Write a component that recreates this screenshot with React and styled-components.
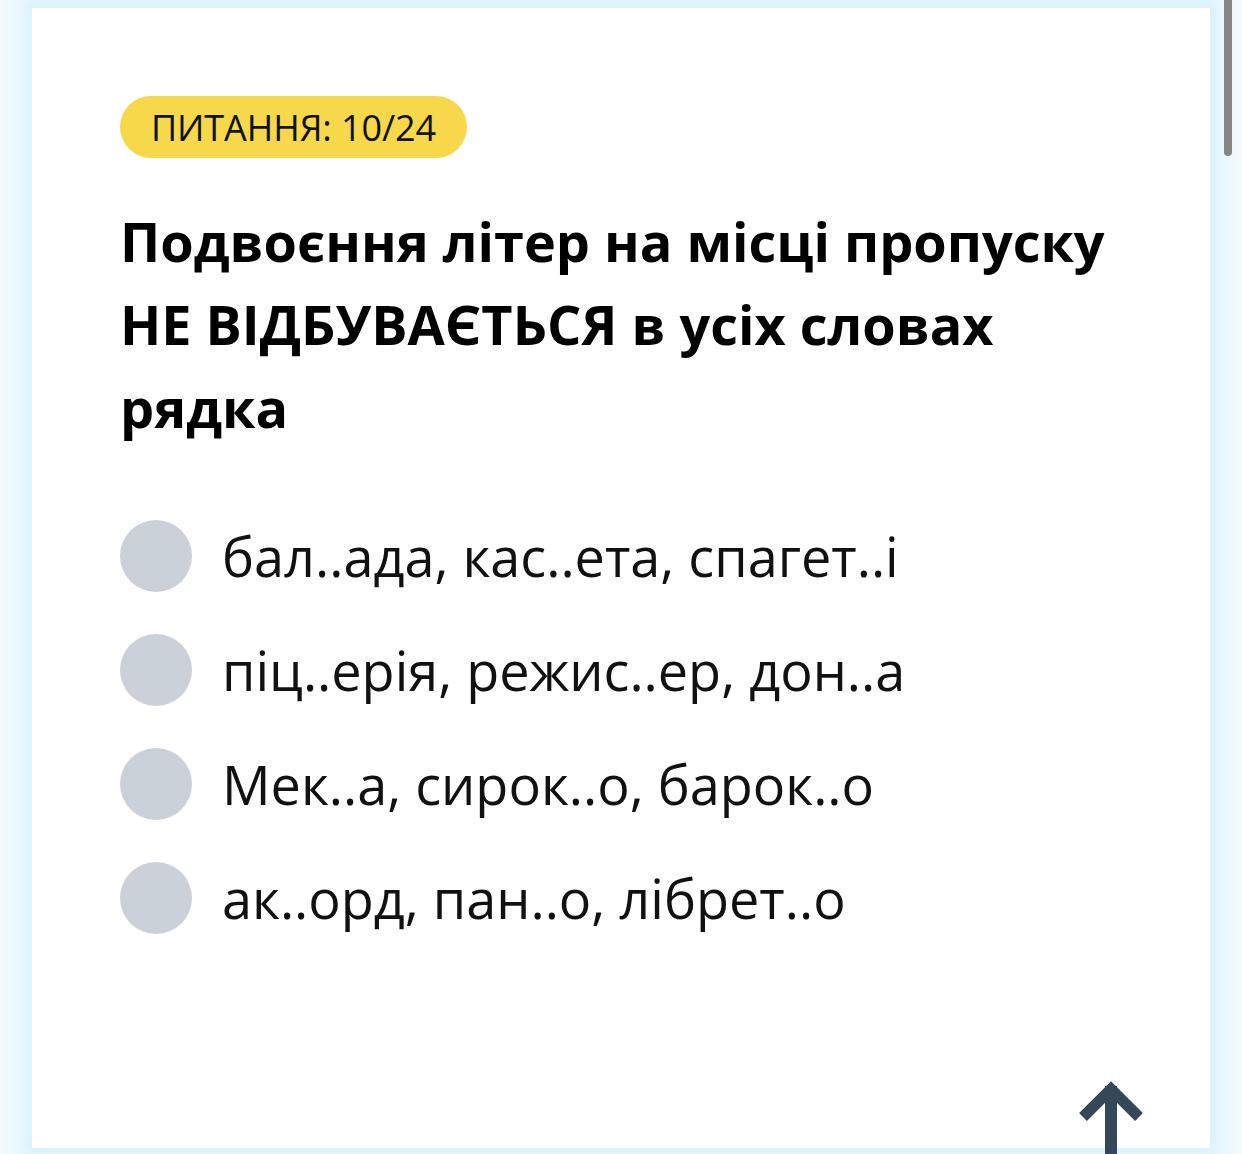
import React from 'react';
import styled, { createGlobalStyle } from 'styled-components';

const GlobalStyle = createGlobalStyle`
    html, body {
        margin: 0;
        padding: 0;
        overflow: hidden;
        background: #ffffff;
        font-family: "Open Sans", "Noto Sans", sans-serif;
        color: #000;
    }
`;

const Page = styled.div`
    width: 1242px;
    height: 1154px;
    box-sizing: border-box;
    padding: 6px 30px 4px 30px;
    background: linear-gradient(to right, #f4fbfe 0px, #e4f6fd 28px, #e4f6fd 1214px, #f4fbfe 1242px);
`;

const Card = styled.div`
    height: 100%;
    box-sizing: border-box;
    background: #fff;
    border: 2px solid #dcf3fc;
    box-shadow: 0 0 10px rgb(200 236 250 / 60%);
    padding: 88px 80px 0 88px;
`;

const Badge = styled.div`
    display: inline-flex;
    align-items: center;
    height: 62px;
    padding: 0 31px;
    border-radius: 31px;
    background: #f6d84a;
    font-size: 36px;
    letter-spacing: -0.1px;
    color: #111;
`;

const Title = styled.h1`
    margin: 42px 0 0 0;
    font-size: 54px;
    font-weight: 700;
    line-height: 83px;
    color: #000;
`;

const Options = styled.div`
    margin-top: 71px;
    display: flex;
    flex-direction: column;
    gap: 42px;
`;

const Option = styled.label`
    display: flex;
    align-items: center;
    gap: 30px;
    height: 72px;
    font-size: 54px;
    color: #111;
`;

const Radio = styled.span`
    flex: none;
    width: 72px;
    height: 72px;
    border-radius: 50%;
    background: #cbd1d9;
`;

const ScrollThumb = styled.div`
    position: fixed;
    top: 0;
    right: 10px;
    width: 8px;
    height: 156px;
    background: #858585;
    border-radius: 0 0 4px 4px;
`;

const TopButton = styled.a`
    position: fixed;
    left: 1075px;
    top: 1062px;
    width: 72px;
    height: 92px;
    display: block;
`;

const options = [
    'бал..ада, кас..ета, спагет..і',
    'піц..ерія, режис..ер, дон..а',
    'Мек..а, сирок..о, барок..о',
    'ак..орд, пан..о, лібрет..о',
];

function App() {
    return (
        <>
            <GlobalStyle />
            <Page>
                <Card>
                    <Badge>ПИТАННЯ: 10/24</Badge>
                    <Title>
                        Подвоєння літер на місці пропуску НЕ ВІДБУВАЄТЬСЯ в усіх словах рядка
                    </Title>
                    <Options>
                        {options.map((o) => (
                            <Option key={o}>
                                <Radio />
                                {o}
                            </Option>
                        ))}
                    </Options>
                </Card>
            </Page>
            <ScrollThumb />
            <TopButton>
                <svg width="72" height="92" viewBox="0 0 72 92">
                    <path d="M36 24 V92" stroke="#35485a" strokeWidth="12" fill="none" />
                    <path d="M8 55 L36 27 L64 55" stroke="#35485a" strokeWidth="11" strokeLinejoin="miter" fill="none" />
                </svg>
            </TopButton>
        </>
    );
}

export default App;
